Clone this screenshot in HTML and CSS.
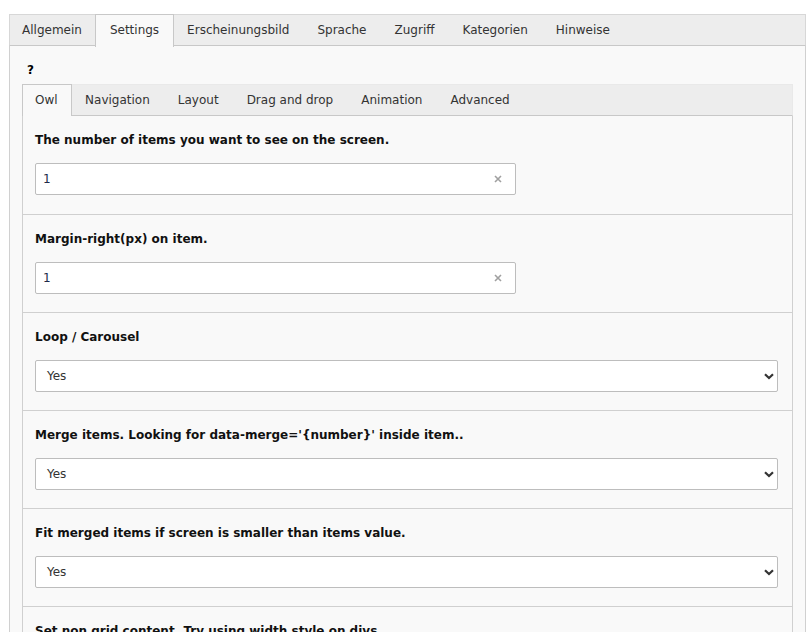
FILE: index.html
```html
<!DOCTYPE html>
<html>
<head>
<meta charset="utf-8">
<link rel="stylesheet" href="styles.css">
</head>
<body>
<div class="wrap">
  <ul class="tabs">
    <li class="tab">Allgemein</li>
    <li class="tab active">Settings</li>
    <li class="tab">Erscheinungsbild</li>
    <li class="tab">Sprache</li>
    <li class="tab">Zugriff</li>
    <li class="tab">Kategorien</li>
    <li class="tab">Hinweise</li>
  </ul>
  <div class="panel">
    <div class="help">?</div>
    <ul class="tabs subtabs">
      <li class="tab active">Owl</li>
      <li class="tab">Navigation</li>
      <li class="tab">Layout</li>
      <li class="tab">Drag and drop</li>
      <li class="tab">Animation</li>
      <li class="tab">Advanced</li>
    </ul>
    <div class="subpanel">
      <div class="field">
        <div class="label">The number of items you want to see on the screen.</div>
        <div class="input"><span>1</span><svg class="clear" width="8" height="8" viewBox="0 0 8 8"><path d="M1 1L7 7M7 1L1 7" stroke="#a0a0a0" stroke-width="1.6"/></svg></div>
      </div>
      <div class="field">
        <div class="label">Margin-right(px) on item.</div>
        <div class="input"><span>1</span><svg class="clear" width="8" height="8" viewBox="0 0 8 8"><path d="M1 1L7 7M7 1L1 7" stroke="#a0a0a0" stroke-width="1.6"/></svg></div>
      </div>
      <div class="field sel">
        <div class="label">Loop / Carousel</div>
        <div class="select"><span>Yes</span><svg class="chev" width="10" height="7" viewBox="0 0 10 7"><path d="M1 1.2L5 5L9 1.2" fill="none" stroke="#333" stroke-width="2.2"/></svg></div>
      </div>
      <div class="field sel">
        <div class="label">Merge items. Looking for data-merge='{number}' inside item..</div>
        <div class="select"><span>Yes</span><svg class="chev" width="10" height="7" viewBox="0 0 10 7"><path d="M1 1.2L5 5L9 1.2" fill="none" stroke="#333" stroke-width="2.2"/></svg></div>
      </div>
      <div class="field sel">
        <div class="label">Fit merged items if screen is smaller than items value.</div>
        <div class="select"><span>Yes</span><svg class="chev" width="10" height="7" viewBox="0 0 10 7"><path d="M1 1.2L5 5L9 1.2" fill="none" stroke="#333" stroke-width="2.2"/></svg></div>
      </div>
      <div class="field sel">
        <div class="label">Set non grid content. Try using width style on divs.</div>
        <div class="select"><span>Yes</span><svg class="chev" width="10" height="7" viewBox="0 0 10 7"><path d="M1 1.2L5 5L9 1.2" fill="none" stroke="#333" stroke-width="2.2"/></svg></div>
      </div>
    </div>
  </div>
</div>
</body>
</html>
```

FILE: styles.css
```css
html, body {
  margin: 0;
  padding: 0;
  background: #ffffff;
  overflow: hidden;
  height: 632px;
}
body {
  font-family: "DejaVu Sans", Verdana, sans-serif;
  font-size: 12px;
  color: #333;
}
.wrap {
  margin: 14px 1px 0 9px;
}
.tabs {
  list-style: none;
  margin: 0;
  padding: 0;
  display: flex;
  background: #ededed;
  border: 1px solid #d7d7d7;
  border-bottom: 1px solid #c8c8c8;
  height: 30px;
}
.tab {
  padding: 0 13.5px;
  line-height: 30px;
  color: #333;
  border: 1px solid transparent;
  border-top: 0;
  border-bottom: 0;
  margin-left: -1px;
}
.tab:first-child {
  padding-left: 12px;
}
.tab.active {
  background: #f9f9f9;
  border-color: #c8c8c8;
  border-top: 1px solid #c8c8c8;
  margin-top: -1px;
  height: 31px;
  line-height: 31px;
  position: relative;
  z-index: 1;
  padding-bottom: 1px;
}
.panel {
  background: #f9f9f9;
  border-left: 1px solid #d0d0d0;
  border-right: 1px solid #d0d0d0;
  padding: 15px 12px 0 12px;
  height: 600px;
}
.help {
  font-weight: bold;
  color: #000;
  line-height: 18px;
  padding-left: 5px;
  margin-bottom: 5px;
}
.subtabs {
  border-color: #e9e9e9;
  border-bottom-color: #c8c8c8;
}
.subtabs .tab {
  padding: 0 13.5px;
}
.subtabs .tab:first-child {
  padding-left: 12px;
  padding-right: 13px;
}
.subpanel {
  border-left: 1px solid #d0d0d0;
  border-right: 1px solid #d0d0d0;
  background: #f9f9f9;
}
.field {
  padding: 14px 14px 18.5px 12px;
  border-bottom: 1px solid #d0d0d0;
}
.field.sel {
  padding-top: 14px;
  padding-bottom: 18px;
}
.label {
  font-weight: bold;
  color: #111;
  line-height: 20px;
  margin-bottom: 13px;
  font-size: 12px;
}
.input, .select {
  height: 30px;
  background: #fff;
  border: 1px solid #bdbdbd;
  border-radius: 2px;
  display: flex;
  align-items: center;
  justify-content: space-between;
}
.input {
  padding: 0 13px 0 7px;
  box-sizing: content-box;
  width: 459px;
}
.input span {
  color: #1e2a4a;
}
.select {
  padding: 0 3px 0 11px;
}
.select span {
  color: #333;
}
.clear, .chev {
  display: block;
}
```
